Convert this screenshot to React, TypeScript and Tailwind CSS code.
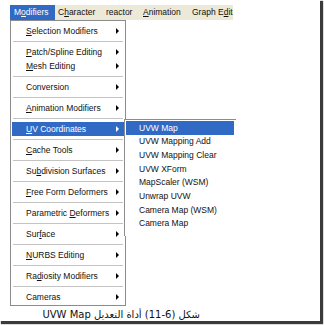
import React from "react";

type Item = { label: string; u?: number; hot?: boolean } | "sep";

const mainItems: Item[] = [
  { label: "Selection Modifiers", u: 0 },
  "sep",
  { label: "Patch/Spline Editing", u: 0 },
  { label: "Mesh Editing", u: 0 },
  "sep",
  { label: "Conversion" },
  "sep",
  { label: "Animation Modifiers", u: 0 },
  "sep",
  { label: "UV Coordinates", u: 0, hot: true },
  "sep",
  { label: "Cache Tools", u: 0 },
  "sep",
  { label: "Subdivision Surfaces", u: 2 },
  "sep",
  { label: "Free Form Deformers", u: 0 },
  "sep",
  { label: "Parametric Deformers", u: 11 },
  "sep",
  { label: "Surface", u: 3 },
  "sep",
  { label: "NURBS Editing", u: 0 },
  "sep",
  { label: "Radiosity Modifiers", u: 2 },
  "sep",
  { label: "Cameras" },
];

const subItems = [
  "UVW Map",
  "UVW Mapping Add",
  "UVW Mapping Clear",
  "UVW XForm",
  "MapScaler (WSM)",
  "Unwrap UVW",
  "Camera Map (WSM)",
  "Camera Map",
];

const Label = ({ text, u }: { text: string; u?: number }) => {
  if (u === undefined) return <span>{text}</span>;
  return (
    <span>
      {text.slice(0, u)}
      <span className="underline underline-offset-1">{text[u]}</span>
      {text.slice(u + 1)}
    </span>
  );
};

const Arrow = ({ white }: { white?: boolean }) => (
  <span
    className={`w-0 h-0 border-y-[3px] border-y-transparent border-l-[3px] ${
      white ? "border-l-white" : "border-l-black"
    }`}
  />
);

export default function App() {
  return (
    <div
      className="w-[324px] h-[325px] bg-white overflow-hidden"
      style={{ fontFamily: '"Liberation Sans", Arial, sans-serif' }}
    >
      <div className="w-[320px] h-[321px] bg-white shadow-[2px_2px_1px_1px_#3a3a3a] pl-[10px] pt-[5px] text-[8.5px] text-[#111] leading-none">
        {/* menu bar */}
        <div className="flex w-[223px] h-[15px] bg-[#ece9d8] items-stretch whitespace-nowrap overflow-hidden">
          <div className="flex items-center px-[4px] bg-[#316ac5] text-white w-[45px] shrink-0">
            <Label text="Modifiers" u={1} />
          </div>
          <div className="flex items-center pl-[3px] w-[51px] shrink-0">
            <Label text="Character" u={1} />
          </div>
          <div className="flex items-center w-[37px] shrink-0">
            <span>reactor</span>
          </div>
          <div className="flex items-center w-[49px] shrink-0">
            <Label text="Animation" u={0} />
          </div>
          <div className="flex items-center">
            <Label text="Graph Edito" u={7} />
          </div>
        </div>

        {/* dropdown */}
        <div className="relative w-[116px] bg-white border border-[#8c8c8c] pt-[3px] pb-[1px]">
          {mainItems.map((it, i) =>
            it === "sep" ? (
              <div key={i} className="h-[7px] flex items-center px-[2px]">
                <div className="h-px w-full bg-[#c4c4c4]" />
              </div>
            ) : (
              <div key={i} className="h-[14px] px-px">
                <div
                  className={`h-full flex items-center justify-between pl-[14px] pr-[5px] ${
                    it.hot ? "bg-[#316ac5] text-white" : ""
                  }`}
                >
                  <Label text={it.label} u={it.u} />
                  <Arrow white={it.hot} />
                </div>
              </div>
            )
          )}

          {/* submenu */}
          <div className="absolute left-[113px] top-[98px] w-[112px] bg-white border-l border-t border-[#8c8c8c] pt-px pb-[5px] pr-[2px]">
            {subItems.map((s, i) => (
              <div
                key={s}
                className={`h-[13.7px] flex items-center pl-[13px] ml-px ${
                  i === 0 ? "bg-[#316ac5] text-white" : ""
                }`}
              >
                {s}
              </div>
            ))}
          </div>
        </div>

        {/* caption */}
        <div
          dir="rtl"
          className="w-[190px] mt-[4px] text-[10px] text-right"
          style={{ fontFamily: '"DejaVu Sans", sans-serif' }}
        >
          شكل (6-11) أداة التعديل UVW Map
        </div>
      </div>
    </div>
  );
}
